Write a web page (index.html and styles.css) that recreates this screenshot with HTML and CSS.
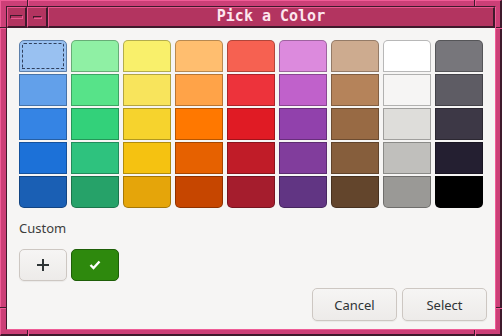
FILE: index.html
```html
<!DOCTYPE html>
<html lang="en">
<head>
	<meta charset="utf-8">
	<title>Pick a Color</title>
	<link rel="stylesheet" href="styles.css">
</head>
<body>
   <div class="frame">
       <span class="notch v" style="left:26px"></span>
       <span class="notch v" style="left:473px"></span>
       <span class="notch v bottom" style="left:26px"></span>
       <span class="notch v bottom" style="left:473px"></span>
       <span class="notch h" style="top:26px"></span>
       <span class="notch h" style="top:306px"></span>
       <span class="notch h right" style="top:26px"></span>
       <span class="notch h right" style="top:306px"></span>

       <div class="inner">
           <div class="titlebar">
               <div class="tb-btn"><span class="menu-icon"></span></div>
               <div class="tb-btn"><span class="min-icon"></span></div>
               <div class="tb-title">Pick a Color</div>
           </div>

           <div class="content">
               <div class="picker">
                   <div class="palette" id="palette"></div>
                   <div class="label">Custom</div>
                   <div class="custom">
                       <button class="btn small">
                           <svg width="12" height="12" viewBox="0 0 12 12"><path d="M6 0v12M0 6h12" stroke="#2e3436" stroke-width="2"/></svg>
                       </button>
                       <button class="custom-color">
                           <svg width="12" height="10" viewBox="0 0 12 10"><path d="M1.5 5l3 3 6-6.5" fill="none" stroke="#fff" stroke-width="2.4"/></svg>
                       </button>
                   </div>
               </div>

               <div class="actions">
                   <button class="btn">Cancel</button>
                   <button class="btn">Select</button>
               </div>
           </div>
       </div>
   </div>

   <script>
       const columns = [
           ['#99c1f1', '#62a0ea', '#3584e4', '#1c71d8', '#1a5fb4'],
           ['#8ff0a4', '#57e389', '#33d17a', '#2ec27e', '#26a269'],
           ['#f9f06b', '#f8e45c', '#f6d32d', '#f5c211', '#e5a50a'],
           ['#ffbe6f', '#ffa348', '#ff7800', '#e66100', '#c64600'],
           ['#f66151', '#ed333b', '#e01b24', '#c01c28', '#a51d2d'],
           ['#dc8add', '#c061cb', '#9141ac', '#813d9c', '#613583'],
           ['#cdab8f', '#b5835a', '#986a44', '#865e3c', '#63452c'],
           ['#ffffff', '#f6f5f4', '#deddda', '#c0bfbc', '#9a9996'],
           ['#77767b', '#5e5c64', '#3d3846', '#241f31', '#000000']
       ];

       const palette = document.getElementById('palette');
       columns.forEach((colors, i) => {
           const col = document.createElement('div');
           col.classList.add('col');
           colors.forEach((color, j) => {
               const swatch = document.createElement('div');
               swatch.classList.add('swatch');
               if (i === 0 && j === 0) swatch.classList.add('selected');
               swatch.style.background = color;
               col.appendChild(swatch);
           });
           palette.appendChild(col);
       });
   </script>
</body>
</html>
```

FILE: styles.css
```css
body {
	margin: 0;
	font-family: 'Noto Sans', sans-serif;
}

.frame {
	position: relative;
	width: 502px;
	height: 336px;
	box-sizing: border-box;
	background-color: #cc3f77;
	border-style: solid;
	border-width: 1px 2px 2px 1px;
	border-color: #ef5c96 #3f1a2c #3f1a2c #ef5c96;
	padding: 5px 4px 4px 5px;
}

.notch {
	position: absolute;
	background-color: #3f1a2c;
}
.notch.v {
	top: -1px;
	width: 1px;
	height: 6px;
	border-right: 1px solid #ef5c96;
}
.notch.v.bottom {
	top: auto;
	bottom: -2px;
}
.notch.h {
	left: -1px;
	width: 6px;
	height: 1px;
	border-bottom: 1px solid #ef5c96;
}
.notch.h.right {
	left: auto;
	right: -2px;
}

.inner {
	height: 100%;
	box-sizing: border-box;
	border: 1px solid;
	border-color: #3f1a2c #ef5c96 #ef5c96 #3f1a2c;
	display: flex;
	flex-direction: column;
}

.titlebar {
	display: flex;
	height: 21px;
	flex-shrink: 0;
}
.tb-btn,
.tb-title {
	box-sizing: border-box;
	background-color: #b33460;
	border-style: solid;
	border-width: 1px 2px 2px 1px;
	border-color: #e8578f #3f1a2c #3f1a2c #e8578f;
}
.tb-btn {
	width: 20px;
	display: flex;
	align-items: center;
	justify-content: center;
}
.tb-btn + .tb-btn {
	width: 21px;
}
.menu-icon {
	width: 11px;
	height: 2px;
	border: 1px solid;
	border-color: #3f1a2c #e8578f #e8578f #3f1a2c;
	background-color: #b33460;
	margin-top: -1px;
}
.min-icon {
	width: 7px;
	height: 1px;
	border: 1px solid;
	border-color: #3f1a2c #e8578f #e8578f #3f1a2c;
}
.tb-title {
	flex: 1;
	text-align: center;
	font-family: 'DejaVu Sans Mono', monospace;
	font-weight: bold;
	font-size: 15px;
	line-height: 17px;
	color: #fde6ee;
}

.content {
	flex: 1;
	background-color: #f6f5f4;
	display: flex;
	flex-direction: column;
}

.picker {
	padding: 12px 12px 0;
}

.palette {
	display: flex;
	gap: 4px;
}
.col {
	display: flex;
	flex-direction: column;
	gap: 2px;
}
.swatch {
	width: 48px;
	height: 32px;
	box-sizing: border-box;
	border: 1px solid rgba(0, 0, 0, 0.28);
}
.col .swatch:first-child {
	border-radius: 5px 5px 0 0;
}
.col .swatch:last-child {
	border-radius: 0 0 5px 5px;
}
.swatch.selected {
	border-color: #5d7faa;
	outline: 1px dashed #2f3f5c;
	outline-offset: -4px;
}

.label {
	margin-top: 10px;
	font-size: 13px;
	line-height: 20px;
	color: #3d3d3d;
}

.custom {
	margin-top: 11px;
	display: flex;
	gap: 4px;
}

.btn {
	font-family: 'Noto Sans', sans-serif;
	font-size: 13px;
	color: #2e3436;
	width: 85px;
	height: 33px;
	padding: 0;
	background: linear-gradient(#f6f5f4, #edebe9);
	border: 1px solid #cdc7c2;
	border-radius: 5px;
	box-shadow: 0 1px 1px rgba(0, 0, 0, 0.05);
	display: flex;
	align-items: center;
	justify-content: center;
}
.btn.small {
	width: 48px;
	height: 32px;
}

.custom-color {
	width: 48px;
	height: 32px;
	padding: 0;
	background-color: #2e890d;
	border: 1px solid #1e5e08;
	border-radius: 5px;
	display: flex;
	align-items: center;
	justify-content: center;
}

.actions {
	margin-top: auto;
	display: flex;
	justify-content: flex-end;
	gap: 5px;
	padding: 0 8px 8px;
}
```
